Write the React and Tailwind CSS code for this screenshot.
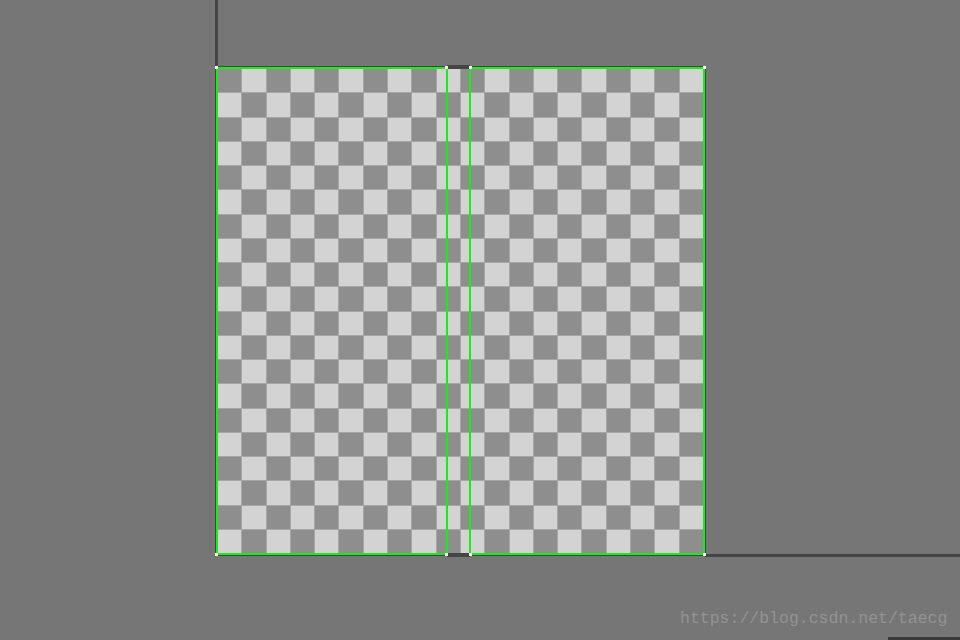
import React from "react";

const cells = Array.from({ length: 400 }, (_, i) => i);

function Dot({ x, y }) {
  return (
    <div
      className="absolute w-[3px] h-[3px] bg-white"
      style={{ left: x, top: y }}
    />
  );
}

export default function App() {
  return (
    <div className="relative w-[960px] h-[640px] overflow-hidden bg-[#767676]">
      {/* axis line from top */}
      <div className="absolute left-[215px] top-0 w-[3px] h-[67px] bg-[#454545]" />
      {/* bottom-right axis line */}
      <div className="absolute left-[705px] top-[554px] w-[255px] h-[3px] bg-[#454545]" />
      <div className="absolute left-[888px] top-[637px] w-[72px] h-[3px] bg-[#3a3a3a]" />

      {/* image frame */}
      <div className="absolute left-[215px] top-[66px] w-[491px] h-[490px] bg-[#454545] p-px">
        <div className="w-full h-full border-2 border-[#14f014] bg-[#a6a6a6]">
          <div className="grid grid-cols-20 grid-rows-20 gap-px w-full h-full">
            {cells.map((i) => {
              const r = Math.floor(i / 20);
              const c = i % 20;
              return (
                <div
                  key={i}
                  className={(r + c) % 2 === 0 ? "bg-[#8e8e8e]" : "bg-[#d3d3d3]"}
                />
              );
            })}
          </div>
        </div>
      </div>

      {/* middle seam: dark top/bottom bar between sprites */}
      <div className="absolute left-[447px] top-[65px] w-[23px] h-[4px] bg-[#454545]" />
      <div className="absolute left-[447px] top-[553px] w-[23px] h-[4px] bg-[#454545]" />
      <div className="absolute left-[446px] top-[67px] w-[2px] h-[488px] bg-[#14f014]" />
      <div className="absolute left-[469px] top-[67px] w-[2px] h-[488px] bg-[#14f014]" />

      <Dot x={215} y={66} />
      <Dot x={445} y={66} />
      <Dot x={469} y={66} />
      <Dot x={703} y={66} />
      <Dot x={215} y={553} />
      <Dot x={445} y={553} />
      <Dot x={469} y={553} />
      <Dot x={703} y={553} />

      {/* watermark */}
      <div
        className="absolute left-[680px] top-[608px] text-[16.5px] leading-[22px] text-[#939393] whitespace-nowrap"
        style={{ fontFamily: '"Liberation Mono", "DejaVu Sans Mono", monospace' }}
      >
        https://blog.csdn.net/taecg
      </div>
    </div>
  );
}
